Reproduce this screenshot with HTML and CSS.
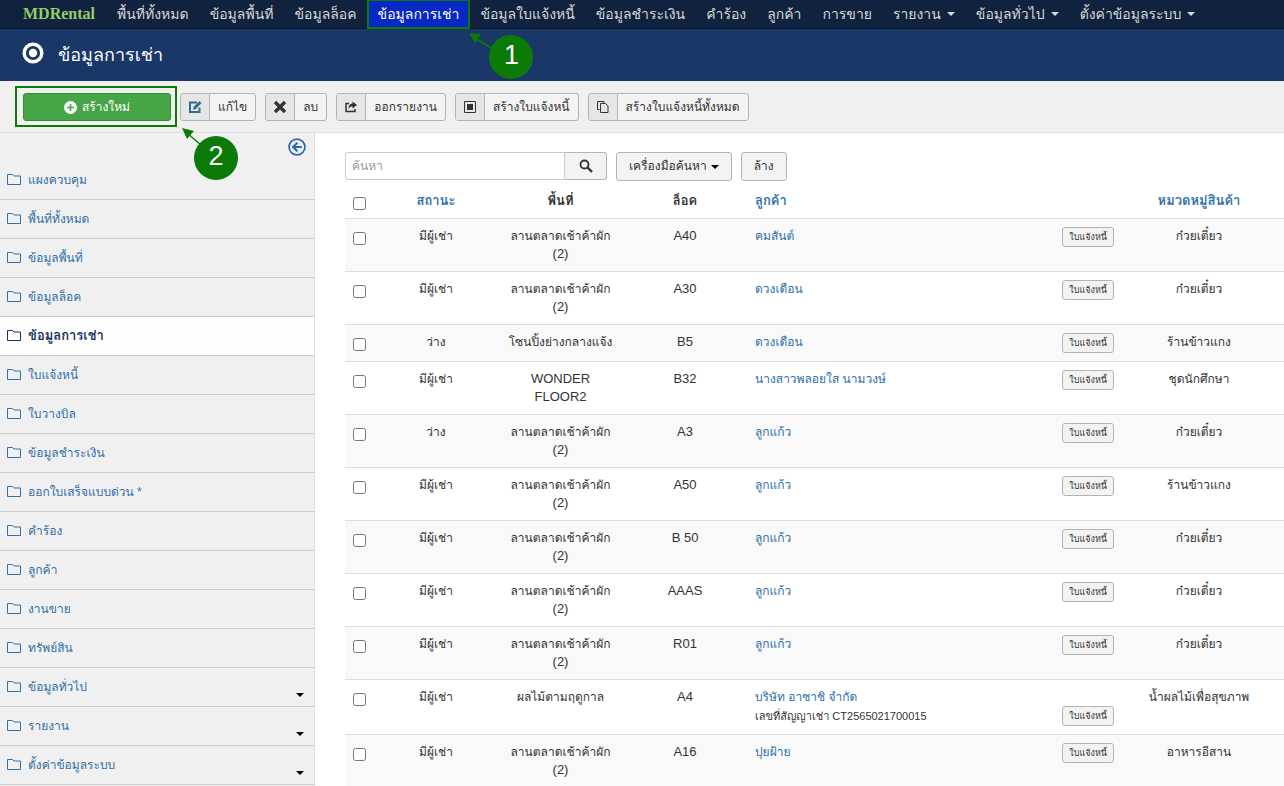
FILE: index.html
```html
<!DOCTYPE html>
<html lang="th">
<head>
<meta charset="utf-8">
<title>ข้อมูลการเช่า - MDRental</title>
<link rel="stylesheet" href="styles.css">
</head>
<body>
<svg class="sprite" aria-hidden="true">
  <symbol id="folder" viewBox="0 0 14 12"><path d="M.5 10.500V.5h5l1.500 1.500h6.500v8.500z" fill="none" stroke="currentColor"/></symbol>
</svg>
<div class="app">
  <nav class="topbar">
    <a class="brand" href="#">MDRental</a>
    <a class="nav-link" href="#">พื้นที่ทั้งหมด</a>
    <a class="nav-link" href="#">ข้อมูลพื้นที่</a>
    <a class="nav-link" href="#">ข้อมูลล็อค</a>
    <div class="nav-current">
      <a class="nav-link nav-link-active" href="#">ข้อมูลการเช่า</a>
      <div class="callout callout-nav">
        <svg class="callout-arrow" viewBox="0 0 30 20"><path d="M6 5l24 15" stroke="#0b7a06" stroke-width="1.500"/><path d="M0 0l12 1-6 9z" fill="#0b7a06"/></svg>
        <span class="callout-number">1</span>
      </div>
    </div>
    <a class="nav-link" href="#">ข้อมูลใบแจ้งหนี้</a>
    <a class="nav-link" href="#">ข้อมูลชำระเงิน</a>
    <a class="nav-link" href="#">คำร้อง</a>
    <a class="nav-link" href="#">ลูกค้า</a>
    <a class="nav-link" href="#">การขาย</a>
    <a class="nav-link" href="#">รายงาน<i class="caret"></i></a>
    <a class="nav-link" href="#">ข้อมูลทั่วไป<i class="caret"></i></a>
    <a class="nav-link" href="#">ตั้งค่าข้อมูลระบบ<i class="caret"></i></a>
  </nav>

  <header class="titlebar">
    <svg class="title-icon" viewBox="0 0 22 22"><circle cx="11" cy="11" r="8.800" fill="none" stroke="#fff" stroke-width="3.400"/><circle cx="11" cy="11" r="4.200" fill="#fff"/></svg>
    <h1 class="title">ข้อมูลการเช่า</h1>
  </header>

  <div class="toolbar">
    <div class="create-wrap">
      <button class="create" type="button"><svg class="create-icon" viewBox="0 0 13 13"><circle cx="6.500" cy="6.500" r="6.500" fill="#fff"/><path d="M6.500 3v7M3 6.500h7" stroke="#46a546" stroke-width="1.600"/></svg>สร้างใหม่</button>
      <div class="callout callout-create">
        <svg class="callout-arrow" viewBox="0 0 30 20"><path d="M5 5l14 12" stroke="#0b7a06" stroke-width="1.500"/><path d="M0 0l12 3-7 8z" fill="#0b7a06"/></svg>
        <span class="callout-number">2</span>
      </div>
    </div>
    <button class="tool" type="button"><span class="tool-icon"><svg viewBox="0 0 14 14"><path d="M9 2.500H2v9.500h9.500V7.500" fill="none" stroke="#2f6f8c" stroke-width="2"/><path d="M5 9.800l.7-3L11.500 1 13.500 3 7.800 8.900z" fill="#2f6f8c"/></svg></span><span class="tool-text">แก้ไข</span></button>
    <button class="tool" type="button"><span class="tool-icon"><svg viewBox="0 0 14 14"><path d="M2 2l10 10M12 2L2 12" stroke="#333" stroke-width="3.400"/></svg></span><span class="tool-text">ลบ</span></button>
    <button class="tool" type="button"><span class="tool-icon"><svg viewBox="0 0 14 14"><path d="M5 3.500H2v8h9V9" fill="none" stroke="#333" stroke-width="1.500"/><path d="M8.500 1.500L13 5 8.500 8.500V6.500C6.500 6.500 5.500 7 4.500 9c0-3 1-5.300 4-5.500z" fill="#333"/></svg></span><span class="tool-text">ออกรายงาน</span></button>
    <button class="tool" type="button"><span class="tool-icon"><svg viewBox="0 0 14 14"><path d="M1.500 1.500h11v11h-11z" fill="none" stroke="#333"/><path d="M4 4h6v6H4z" fill="#333"/></svg></span><span class="tool-text">สร้างใบแจ้งหนี้</span></button>
    <button class="tool" type="button"><span class="tool-icon"><svg viewBox="0 0 14 14"><path d="M3.500 9.500h-2v-8h6.500v2" fill="none" stroke="#333"/><path d="M4.500 3.500h5l2.500 2.500v6.500H4.500z" fill="none" stroke="#333"/></svg></span><span class="tool-text">สร้างใบแจ้งหนี้ทั้งหมด</span></button>
  </div>

  <div class="body">
    <aside class="sidebar">
      <div class="sidebar-head">
        <button class="collapse" type="button" aria-label="ซ่อนเมนู"><svg viewBox="0 0 17 17"><circle cx="8.500" cy="8.500" r="7.500" fill="none" stroke="#2a69b0" stroke-width="1.600"/><path d="M13 8.500H5M8.800 4.500l-4 4 4 4" fill="none" stroke="#2a69b0" stroke-width="2"/></svg></button>
      </div>
      <a class="side-link" href="#"><svg><use href="#folder"/></svg>แผงควบคุม</a>
      <a class="side-link" href="#"><svg><use href="#folder"/></svg>พื้นที่ทั้งหมด</a>
      <a class="side-link" href="#"><svg><use href="#folder"/></svg>ข้อมูลพื้นที่</a>
      <a class="side-link" href="#"><svg><use href="#folder"/></svg>ข้อมูลล็อค</a>
      <a class="side-link side-link-active" href="#"><svg><use href="#folder"/></svg>ข้อมูลการเช่า</a>
      <a class="side-link" href="#"><svg><use href="#folder"/></svg>ใบแจ้งหนี้</a>
      <a class="side-link" href="#"><svg><use href="#folder"/></svg>ใบวางบิล</a>
      <a class="side-link" href="#"><svg><use href="#folder"/></svg>ข้อมูลชำระเงิน</a>
      <a class="side-link" href="#"><svg><use href="#folder"/></svg>ออกใบเสร็จแบบด่วน *</a>
      <a class="side-link" href="#"><svg><use href="#folder"/></svg>คำร้อง</a>
      <a class="side-link" href="#"><svg><use href="#folder"/></svg>ลูกค้า</a>
      <a class="side-link" href="#"><svg><use href="#folder"/></svg>งานขาย</a>
      <a class="side-link" href="#"><svg><use href="#folder"/></svg>ทรัพย์สิน</a>
      <a class="side-link" href="#"><svg><use href="#folder"/></svg>ข้อมูลทั่วไป<i class="caret side-caret"></i></a>
      <a class="side-link" href="#"><svg><use href="#folder"/></svg>รายงาน<i class="caret side-caret"></i></a>
      <a class="side-link" href="#"><svg><use href="#folder"/></svg>ตั้งค่าข้อมูลระบบ<i class="caret side-caret"></i></a>
    </aside>

    <main class="content">
      <form class="filters">
        <div class="search">
          <input class="search-input" type="text" placeholder="ค้นหา" aria-label="ค้นหา">
          <button class="search-button" type="button" aria-label="ค้นหา"><svg viewBox="0 0 14 14"><circle cx="5.500" cy="5.500" r="4" fill="none" stroke="#333" stroke-width="1.800"/><path d="M8.500 8.500l4.500 4.500" stroke="#333" stroke-width="2.400"/></svg></button>
        </div>
        <button class="filter-button" type="button">เครื่องมือค้นหา<i class="caret"></i></button>
        <button class="filter-button" type="button">ล้าง</button>
      </form>

      <table class="grid">
        <colgroup><col class="col-check"><col class="col-text"><col class="col-area"><col class="col-text"><col><col class="col-category"></colgroup>
        <thead>
          <tr><th><input type="checkbox" aria-label="เลือกทั้งหมด"></th><th><a href="#">สถานะ</a></th><th>พื้นที่</th><th>ล็อค</th><th class="customer"><a href="#">ลูกค้า</a></th><th class="category"><a href="#">หมวดหมู่สินค้า</a></th></tr>
        </thead>
        <tbody>
          <tr><td><input type="checkbox" aria-label="A40"></td><td>มีผู้เช่า</td><td>ลานตลาดเช้าค้าผัก <span class="latin">(2)</span></td><td class="latin">A40</td><td class="customer"><button class="invoice" type="button">ใบแจ้งหนี้</button><a href="#">คมสันต์</a></td><td class="category">ก๋วยเตี๋ยว</td></tr>
          <tr><td><input type="checkbox" aria-label="A30"></td><td>มีผู้เช่า</td><td>ลานตลาดเช้าค้าผัก <span class="latin">(2)</span></td><td class="latin">A30</td><td class="customer"><button class="invoice" type="button">ใบแจ้งหนี้</button><a href="#">ดวงเดือน</a></td><td class="category">ก๋วยเตี๋ยว</td></tr>
          <tr><td><input type="checkbox" aria-label="B5"></td><td>ว่าง</td><td>โซนปิ้งย่างกลางแจ้ง</td><td class="latin">B5</td><td class="customer"><button class="invoice" type="button">ใบแจ้งหนี้</button><a href="#">ดวงเดือน</a></td><td class="category">ร้านข้าวแกง</td></tr>
          <tr><td><input type="checkbox" aria-label="B32"></td><td>มีผู้เช่า</td><td class="latin">WONDER FLOOR2</td><td class="latin">B32</td><td class="customer"><button class="invoice" type="button">ใบแจ้งหนี้</button><a href="#">นางสาวพลอยใส นามวงษ์</a></td><td class="category">ชุดนักศึกษา</td></tr>
          <tr><td><input type="checkbox" aria-label="A3"></td><td>ว่าง</td><td>ลานตลาดเช้าค้าผัก <span class="latin">(2)</span></td><td class="latin">A3</td><td class="customer"><button class="invoice" type="button">ใบแจ้งหนี้</button><a href="#">ลูกแก้ว</a></td><td class="category">ก๋วยเตี๋ยว</td></tr>
          <tr><td><input type="checkbox" aria-label="A50"></td><td>มีผู้เช่า</td><td>ลานตลาดเช้าค้าผัก <span class="latin">(2)</span></td><td class="latin">A50</td><td class="customer"><button class="invoice" type="button">ใบแจ้งหนี้</button><a href="#">ลูกแก้ว</a></td><td class="category">ร้านข้าวแกง</td></tr>
          <tr><td><input type="checkbox" aria-label="B 50"></td><td>มีผู้เช่า</td><td>ลานตลาดเช้าค้าผัก <span class="latin">(2)</span></td><td class="latin">B 50</td><td class="customer"><button class="invoice" type="button">ใบแจ้งหนี้</button><a href="#">ลูกแก้ว</a></td><td class="category">ก๋วยเตี๋ยว</td></tr>
          <tr><td><input type="checkbox" aria-label="AAAS"></td><td>มีผู้เช่า</td><td>ลานตลาดเช้าค้าผัก <span class="latin">(2)</span></td><td class="latin">AAAS</td><td class="customer"><button class="invoice" type="button">ใบแจ้งหนี้</button><a href="#">ลูกแก้ว</a></td><td class="category">ก๋วยเตี๋ยว</td></tr>
          <tr><td><input type="checkbox" aria-label="R01"></td><td>มีผู้เช่า</td><td>ลานตลาดเช้าค้าผัก <span class="latin">(2)</span></td><td class="latin">R01</td><td class="customer"><button class="invoice" type="button">ใบแจ้งหนี้</button><a href="#">ลูกแก้ว</a></td><td class="category">ก๋วยเตี๋ยว</td></tr>
          <tr><td><input type="checkbox" aria-label="A4"></td><td>มีผู้เช่า</td><td>ผลไม้ตามฤดูกาล</td><td class="latin">A4</td><td class="customer"><a href="#">บริษัท อาซาชิ จำกัด</a><div class="contract"><small>เลขที่สัญญาเช่า CT2565021700015</small><button class="invoice" type="button">ใบแจ้งหนี้</button></div></td><td class="category">น้ำผลไม้เพื่อสุขภาพ</td></tr>
          <tr><td><input type="checkbox" aria-label="A16"></td><td>มีผู้เช่า</td><td>ลานตลาดเช้าค้าผัก <span class="latin">(2)</span></td><td class="latin">A16</td><td class="customer"><button class="invoice" type="button">ใบแจ้งหนี้</button><a href="#">ปุยฝ้าย</a></td><td class="category">อาหารอีสาน</td></tr>
        </tbody>
      </table>
    </main>
  </div>
</div>
</body>
</html>
```
FILE: styles.css
```css
* { box-sizing: border-box; }
body {
  margin: 0;
  background: #fff;
  color: #333;
  font: 12px/18px "Liberation Sans", Loma, Waree, "Noto Sans Thai Looped", sans-serif;
}
a { color: #3071a9; text-decoration: none; }
button, input { font: inherit; color: inherit; }
.sprite { display: none; }
.app { display: flex; flex-direction: column; height: 100vh; overflow: hidden; }

.topbar {
  display: flex;
  flex: none;
  gap: 1px;
  height: 29px;
  padding-left: 13px;
  background: #10223e;
  border-bottom: 1px solid #0d1a2d;
  white-space: nowrap;
}
.brand { padding: 0 11px 0 10px; color: #9c6; font: bold 16px/28px "Liberation Serif", serif; }
.nav-link { display: flex; align-items: center; padding: 0 10px; color: #d9d9d9; font-size: 14px; line-height: 26px; }
.nav-current { position: relative; display: flex; }
.nav-link-active { background: #0728c4; color: #fff; outline: 2px solid #0b7a06; outline-offset: -1px; }
.caret { display: inline-block; margin-left: 6px; border: 4px solid transparent; border-top-color: currentColor; border-bottom: 0; }

.callout { position: absolute; z-index: 2; }
.callout-arrow { display: block; width: 30px; height: 20px; }
.callout-number {
  position: absolute;
  width: 44px;
  height: 44px;
  border-radius: 50%;
  background: #0b7a06;
  color: #fff;
  font-size: 27px;
  line-height: 40px;
  text-align: center;
}
.callout-nav { top: 33px; left: 100%; }
.callout-nav .callout-number { top: 2px; left: 20px; }
.callout-create { top: 40px; left: 165px; }
.callout-create .callout-number { top: 8px; left: 12px; }

.titlebar { display: flex; flex: none; align-items: center; gap: 14px; height: 52px; padding-left: 22px; background: #1a3867; }
.title-icon { width: 22px; height: 22px; margin-bottom: 4px; }
.title { margin: 0; color: #fff; font-size: 18px; font-weight: 400; line-height: 36px; }

.toolbar { display: flex; flex: none; align-items: center; gap: 9px; height: 52px; padding-left: 15px; background: #f0f0f0; border-bottom: 1px solid #ddd; }
.create-wrap { position: relative; width: 162px; height: 41px; margin-right: -6px; padding: 5px 6px; border: 2px solid #0b7a06; }
.create { display: flex; align-items: center; justify-content: center; gap: 5px; width: 148px; height: 28px; padding: 0; background: #46a546; border: 1px solid #3a8a3a; border-radius: 3px; color: #fff; }
.create-icon { width: 13px; height: 13px; }
.tool { display: flex; height: 28px; padding: 0; background: #f3f3f3; border: 1px solid #b3b3b3; border-radius: 3px; line-height: 26px; white-space: nowrap; overflow: hidden; }
.tool-icon { display: flex; align-items: center; justify-content: center; width: 29px; background: #e6e6e6; border-right: 1px solid #b3b3b3; }
.tool-icon svg { width: 14px; height: 14px; }
.tool-text { padding: 0 8px; }

.body { display: flex; flex: 1; min-height: 0; }
.sidebar { flex: none; width: 315px; background: #f0f0f0; border-right: 1px solid #ddd; }
.sidebar-head { display: flex; justify-content: flex-end; height: 28px; padding: 5px 8px; }
.collapse { width: 18px; height: 18px; padding: 0; background: none; border: 0; }
.collapse svg { display: block; width: 18px; height: 18px; }
.side-link { display: flex; align-items: center; gap: 7px; height: 39px; padding-left: 7px; border-bottom: 1px solid #ccc; }
.side-link svg { width: 14px; height: 12px; }
.side-link-active { background: #fdfdfd; color: #1a2f5a; font-size: 13px; font-weight: 700; }
.side-caret { align-self: flex-end; margin: 0 10px 9px auto; color: #000; }

.content { flex: 1; min-width: 0; padding: 18px 0 0 30px; }
.filters { display: flex; align-items: center; gap: 9px; height: 30px; }
.search { display: flex; height: 28px; }
.search-input { width: 220px; padding: 0 6px; border: 1px solid #ccc; border-radius: 3px 0 0 3px; background: #fff; }
.search-input::placeholder { color: #999; }
.search-button { display: flex; align-items: center; justify-content: center; width: 42px; padding: 0; background: #f3f3f3; border: 1px solid #b3b3b3; border-left-width: 0; border-radius: 0 3px 3px 0; }
.search-button svg { width: 14px; height: 14px; }
.filter-button { height: 29px; padding: 0 12px; background: #f3f3f3; border: 1px solid #b3b3b3; border-radius: 3px; white-space: nowrap; }
.filter-button .caret { margin-left: 4px; color: #000; vertical-align: middle; }

.grid { width: 100%; table-layout: fixed; border-collapse: collapse; text-align: center; }
.col-check { width: 29px; }
.col-text { width: 124px; }
.col-area { width: 125px; }
.col-category { width: 162px; }
.grid th, .grid td { padding: 8px; vertical-align: top; }
.grid th { padding-top: 11px; font-size: 13px; }
.grid td { border-top: 1px solid #ddd; }
.grid tbody tr:nth-child(odd) { background: #f9f9f9; }
.grid input { display: block; width: 13px; height: 13px; margin: 5px 0 0; }
.grid .customer { text-align: left; }
.grid .category { padding-right: 16px; white-space: nowrap; }
.latin { font-size: 13px; }
.invoice { float: right; height: 20px; padding: 0 6px; background: #f3f3f3; border: 1px solid #b3b3b3; border-radius: 3px; font-size: 9px; line-height: 16px; }
.contract { display: flex; align-items: center; justify-content: space-between; height: 20px; }
.contract small { font-size: 11px; }
```
